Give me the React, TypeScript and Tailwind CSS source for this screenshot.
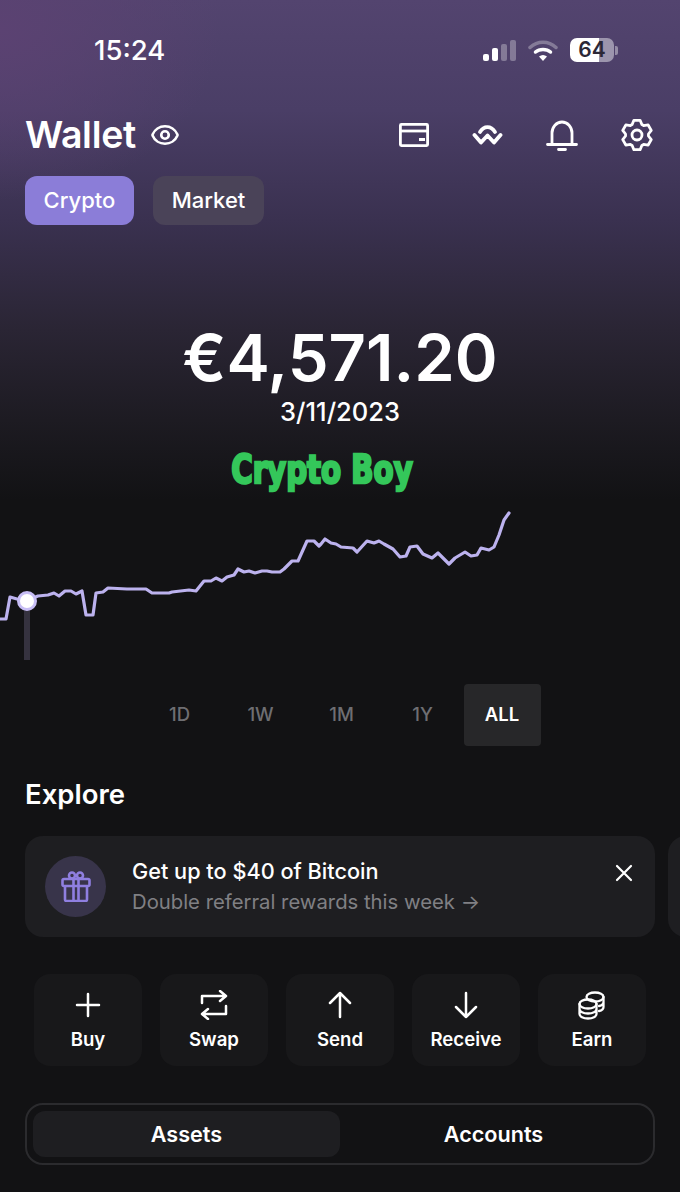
import { Eye } from "lucide-react";

// chart trace, read off the reference (x, y inside the 540x170 box)
const trace: [number, number][] = [
  [0, 119], [6, 119], [10, 97], [17, 99], [28, 100], [38, 96], [48, 95], [54, 93], [59, 96], [65, 91], [71, 91], [76, 94],
  [82, 91], [86, 115], [93, 115], [96, 93], [103, 92], [108, 88], [127, 89], [146, 89], [152, 93], [169, 93], [172, 92],
  [189, 90], [196, 91], [204, 81], [211, 81], [216, 78], [222, 81], [227, 77], [234, 75], [238, 69], [244, 72], [249, 71],
  [255, 73], [262, 71], [267, 71], [272, 72], [280, 72], [284, 69], [292, 61], [298, 61], [307, 41], [314, 41], [319, 46],
  [321, 44], [325, 39], [331, 43], [336, 44], [341, 47], [353, 48], [357, 52], [367, 41], [374, 43], [379, 41], [384, 44],
  [393, 49], [400, 57], [406, 56], [410, 47], [417, 46], [423, 54], [432, 58], [438, 53], [449, 64], [455, 58], [465, 52],
  [471, 56], [477, 55], [481, 48], [489, 50], [494, 47], [499, 35], [504, 20], [509, 13],
];

// six blocky teeth, same shape as the reference's gear
const gearPath = () => {
  const pts: string[] = [];
  for (let i = 0; i < 6; i++) {
    const a = -90 + i * 60;
    const spots: [number, number][] = [[a - 25, 11.5], [a - 12, 15], [a + 12, 15], [a + 25, 11.5]];
    spots.forEach(([deg, r]) => {
      const rad = (deg * Math.PI) / 180;
      pts.push(`${(17 + r * Math.cos(rad)).toFixed(2)} ${(17 + r * Math.sin(rad)).toFixed(2)}`);
    });
  }
  return `M${pts.join("L")}Z`;
};

const ActionIcon = ({ children }: { children: React.ReactNode }) => (
  <svg width="30" height="30" viewBox="0 0 30 30" fill="none" stroke="white" strokeWidth="2.5" strokeLinecap="round" strokeLinejoin="round">
    {children}
  </svg>
);

const actions = [
  { label: "Buy", icon: <path d="M15 4v22M4 15h22" /> },
  { label: "Swap", icon: <path d="M3 13V6h23M21 1l6 5-6 5M27 16v8H4M9 19l-6 5 6 5" /> },
  { label: "Send", icon: <path d="M15 3v24M5 13 15 3l10 10" /> },
  { label: "Receive", icon: <path d="M15 3v24M5 17l10 10 10-10" /> },
  {
    label: "Earn",
    icon: (
      <g strokeWidth="2.3">
        <ellipse cx="18" cy="7" rx="8.5" ry="4.5" />
        <path d="M26.5 7v10c0 2-2 3.500-4.500 4M26.500 12c0 2-2 3.500-4.500 4" />
        <ellipse cx="11" cy="14" rx="8.500" ry="4.500" />
        <path d="M2.500 14v10c0 2.500 3.800 4.500 8.500 4.500s8.500-2 8.500-4.500V14M2.500 19c0 2.500 3.800 4.500 8.500 4.500s8.500-2 8.500-4.500" />
      </g>
    ),
  },
];

const ranges = ["1D", "1W", "1M", "1Y", "ALL"];

export default function App() {
  return (
    <div className="w-[680px] h-[1192px] overflow-hidden [font-family:Inter,sans-serif] text-white bg-[radial-gradient(ellipse_220px_170px_at_0px_30px,#5b4272,transparent),linear-gradient(180deg,#53446f_0px,#4a3e66_110px,#3a3150_220px,#2a2534_330px,#1d1b22_420px,#121214_500px)]">
      {/* status bar */}
      <div className="h-[100px] flex items-center justify-between pl-[94px] pr-[62px]">
        <span className="mt-[2px] text-[27.5px] font-medium">15:24</span>
        <div className="flex items-center gap-[12px]">
          <div className="flex items-end gap-[3px] h-[22px]">
            <div className="w-[6px] h-[7px] rounded-[2px] bg-white" />
            <div className="w-[6px] h-[13px] rounded-[2px] bg-white" />
            <div className="w-[6px] h-[17px] rounded-[2px] bg-white/30" />
            <div className="w-[6px] h-[21px] rounded-[2px] bg-white/30" />
          </div>
          <svg width="30" height="23" viewBox="0 0 30 23" fill="none" strokeLinecap="round">
            <path d="M2 8.500C9.500 1.500 20.500 1.500 28 8.500" stroke="white" strokeOpacity=".3" strokeWidth="3.500" />
            <path d="M7.500 13C11.500 9.500 18.500 9.500 22.500 13" stroke="white" strokeWidth="3.500" />
            <path d="M11 17.500 15 22l4-4.500c-2.500-2-5.500-2-8 0Z" fill="white" />
          </svg>
          <div className="flex items-center gap-[1px]">
            <div className="w-[44px] h-[24px] rounded-[7px] flex items-center justify-center text-[#2c2836] text-[21px] font-semibold bg-[linear-gradient(90deg,#ffffff_29px,#9c95ad_29px)]">
              64
            </div>
            <div className="w-[3px] h-[9px] rounded-r-[2px] bg-white/40" />
          </div>
        </div>
      </div>

      {/* header */}
      <div className="h-[50px] mt-[10px] pl-[25px] pr-[27px] flex items-center">
        <span className="text-[37.5px] font-semibold tracking-[-0.3px]">Wallet</span>
        <Eye size={30} strokeWidth={2.1} className="ml-[14px]" />
        <div className="ml-auto flex items-center gap-[43px]">
          <svg width="30" height="24" viewBox="0 0 30 24" fill="none" stroke="white" strokeWidth="2.800">
            <rect x="1.400" y="1.400" width="27.200" height="21.200" rx="1" />
            <path d="M1 8h28" />
            <path d="M20 15h6v3h-6z" fill="white" stroke="none" />
          </svg>
          <svg width="31" height="20" viewBox="0 0 31 20" fill="none" stroke="white" strokeWidth="3.800" strokeLinejoin="round" strokeLinecap="round">
            <path d="M8 7c4-6.500 11-6.500 15 0" />
            <path d="m2.500 10 6.500 7.500 6.500-7 6.500 7 6.500-7.500" />
          </svg>
          <svg width="32" height="31" viewBox="0 0 32 31" fill="none" stroke="white" strokeWidth="2.800" strokeLinecap="round">
            <path d="M6 24V13a10 11 0 0 1 20 0v11" />
            <path d="M1.500 24.500h29M12.500 29.500h7" />
          </svg>
          <svg width="34" height="34" viewBox="0 0 34 34" fill="none" stroke="white" strokeWidth="2.800" strokeLinejoin="round" className="-mx-[1px]">
            <path d={gearPath()} />
            <circle cx="17" cy="17" r="5" />
          </svg>
        </div>
      </div>

      {/* crypto / market */}
      <div className="mt-[16px] ml-[25px] flex gap-[19px]">
        <div className="w-[109px] h-[49px] rounded-[12px] bg-[#8b7dd8] flex items-center justify-center text-[22px] font-medium">Crypto</div>
        <div className="w-[111px] h-[49px] rounded-[12px] bg-[#4a4358] flex items-center justify-center text-[22px] font-medium">Market</div>
      </div>

      {/* balance */}
      <div className="mt-[91px] flex flex-col items-center">
        <div className="h-[84px] leading-[84px] text-[65px] font-semibold">€4,571.20</div>
        <div className="h-[28px] leading-[28px] -mt-[2px] text-[25.5px] font-medium">3/11/2023</div>
        <div className="h-[40px] leading-[40px] mt-[24px] -ml-[36px] text-[#34c75a] text-[32.5px] font-bold [font-family:'DejaVu_Sans_Condensed','DejaVu_Sans',sans-serif] [font-stretch:condensed] [-webkit-text-stroke:2px_#34c75a] scale-y-[1.22]">Crypto Boy</div>
      </div>

      {/* chart */}
      <div className="mt-[10px] h-[170px] relative">
        <svg width="540" height="170" viewBox="0 0 540 170" fill="none">
          <polyline points={trace.map((p) => p.join(",")).join(" ")} stroke="#bcb2ee" strokeWidth="3.200" strokeLinejoin="round" strokeLinecap="round" />
        </svg>
        <div className="absolute left-[24px] top-[108px] w-[6px] h-[52px] bg-[#35323f]" />
        <div className="absolute left-[17px] top-[91px] w-[20px] h-[20px] rounded-full bg-white border-[3px] border-[#c7bdf5]" />
      </div>

      {/* range */}
      <div className="mt-[14px] flex justify-center gap-[4px]">
        {ranges.map((r) => (
          <div
            key={r}
            className={
              r === "ALL"
                ? "w-[77px] h-[62px] rounded-[4px] bg-[#272729] flex items-center justify-center text-[18.5px] font-semibold text-white"
                : "w-[77px] h-[62px] pl-[3px] flex items-center justify-center text-[18.5px] font-medium text-[#6e6e72]"
            }
          >
            {r}
          </div>
        ))}
      </div>

      {/* explore */}
      <div className="mt-[29px] ml-[25px] h-[38px] leading-[38px] text-[27.5px] font-semibold">Explore</div>

      <div className="mt-[23px] pl-[25px] flex gap-[13px]">
        <div className="w-[630px] h-[101px] shrink-0 rounded-[18px] bg-[#1e1e21] pl-[20px] pr-[22px] flex items-center">
          <div className="w-[61px] h-[61px] rounded-full bg-[#38344a] flex items-center justify-center">
            <svg width="30" height="31" viewBox="0 0 30 31" fill="none" stroke="#8f7fe0" strokeWidth="2.600" strokeLinejoin="round">
              <circle cx="11" cy="4.500" r="3" />
              <circle cx="19" cy="4.500" r="3" />
              <rect x="1.500" y="8" width="27" height="7" rx="1.500" />
              <path d="M4 15v13.500a1.500 1.500 0 0 0 1.500 1.500h19a1.500 1.500 0 0 0 1.500-1.500V15M12.500 8v22M17.500 8v22" />
            </svg>
          </div>
          <div className="ml-[26px] flex-1">
            <div className="text-[21.7px] leading-[30px] font-medium">Get up to $40 of Bitcoin</div>
            <div className="text-[20.3px] leading-[30px] mt-[1px] text-[#808084]">Double referral rewards this week →</div>
          </div>
          <svg width="18" height="18" viewBox="0 0 18 18" className="self-start mt-[28px]" stroke="white" strokeWidth="2.200" strokeLinecap="round">
            <path d="m2 2 14 14M16 2 2 16" />
          </svg>
        </div>
        <div className="w-[100px] h-[101px] shrink-0 rounded-[18px] bg-[#1e1e21]" />
      </div>

      {/* actions */}
      <div className="mt-[37px] px-[34px] flex justify-between">
        {actions.map((a) => (
          <div key={a.label} className="w-[108px] h-[92px] rounded-[16px] bg-[#18181a] flex flex-col items-center pt-[16px]">
            <ActionIcon>{a.icon}</ActionIcon>
            <span className="mt-[6px] text-[18.6px] leading-[26px] font-semibold">{a.label}</span>
          </div>
        ))}
      </div>

      {/* assets / accounts */}
      <div className="mt-[37px] mx-[25px] h-[62px] rounded-[18px] border-2 border-[#2b2b2e] px-[6px] flex items-center">
        <div className="flex-1 h-[46px] rounded-[12px] bg-[#1e1e21] flex items-center justify-center text-[21.6px] font-semibold">Assets</div>
        <div className="flex-1 h-[46px] flex items-center justify-center text-[21.6px] font-semibold">Accounts</div>
      </div>
    </div>
  );
}
